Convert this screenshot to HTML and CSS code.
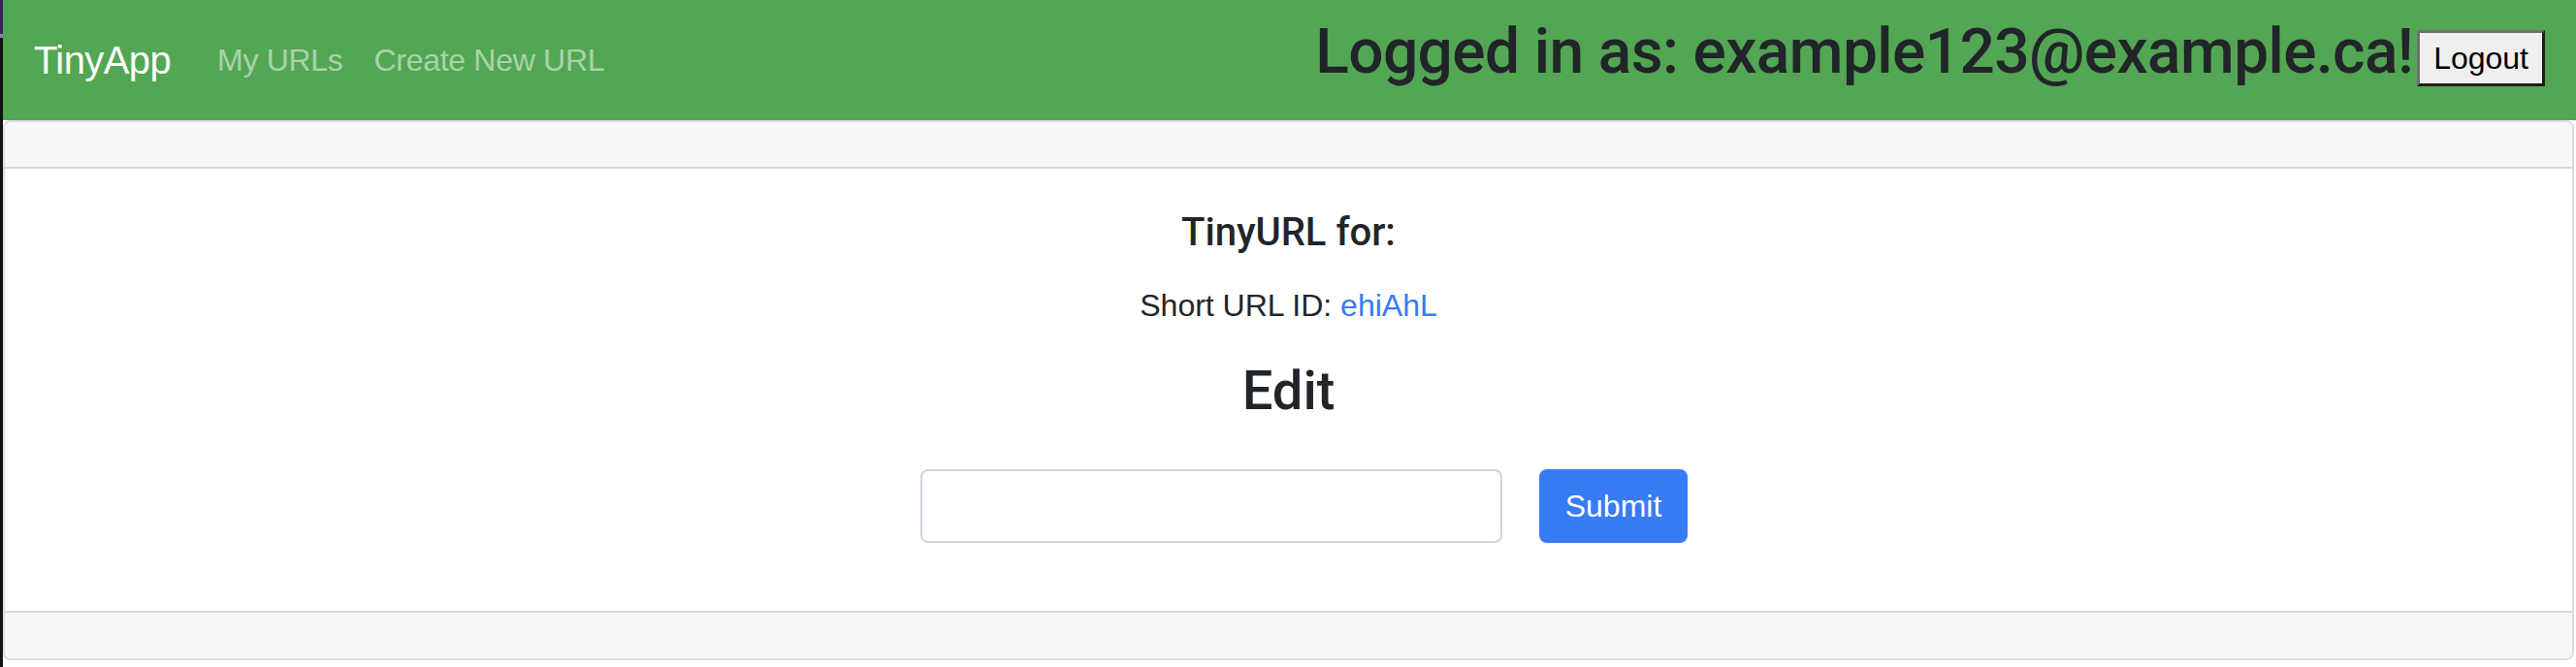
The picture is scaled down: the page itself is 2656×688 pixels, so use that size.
FILE: index.html
```html
<!DOCTYPE html>
<html lang="en">
<head>
<meta charset="utf-8">
<title>TinyApp</title>
<link rel="stylesheet" href="styles.css">
</head>
<body>
<nav class="navbar">
  <a class="brand" href="#">TinyApp</a>
  <div class="nav-links">
    <a class="nav-link" href="#">My URLs</a>
    <a class="nav-link" href="#">Create New URL</a>
  </div>
  <div class="user">
    <h2 class="user-title">Logged in as: example123@example.ca!</h2>
    <button class="logout" type="button">Logout</button>
  </div>
</nav>
<main class="card">
  <div class="card-header"></div>
  <div class="card-body">
    <h5 class="card-title">TinyURL for:</h5>
    <p class="card-text">Short URL ID: <a class="link" href="#">ehiAhL</a></p>
    <h3 class="edit-title">Edit</h3>
    <form class="edit-form">
      <input class="form-control" type="text" name="longURL">
      <button class="btn-primary" type="submit">Submit</button>
    </form>
  </div>
  <div class="card-footer"></div>
</main>
</body>
</html>
```
FILE: styles.css
```css
html, body {
  margin: 0;
  padding: 0;
}
body {
  background: #ffffff;
  min-height: 688px;
  box-sizing: border-box;
  border-left: 3px solid #111;
  border-image: linear-gradient(to bottom, #3b1f66 0, #3b1f66 36px, #8a8a8a 36px, #8a8a8a 40px, #121212 40px) 1;
  font-family: "Liberation Sans", Arial, sans-serif;
  color: #212529;
}
.navbar {
  display: flex;
  align-items: center;
  background: #53a653;
  padding: 16px 32px;
}
.brand {
  font-size: 40px;
  letter-spacing: -0.6px;
  color: #ffffff;
  text-decoration: none;
  margin-right: 32px;
  line-height: 60px;
}
.nav-links {
  display: flex;
}
.nav-link {
  font-size: 32px;
  letter-spacing: -0.3px;
  color: rgba(255, 255, 255, 0.52);
  text-decoration: none;
  padding: 0 16px;
  line-height: 48px;
}
.user {
  margin-left: auto;
  display: flex;
  align-items: center;
}
.user-title {
  font-family: Roboto, "Liberation Sans", sans-serif;
  font-weight: 500;
  font-size: 64px;
  letter-spacing: -0.6px;
  line-height: 76px;
  margin: 0 4px 16px 0;
  color: #212529;
}
.logout {
  font-family: "Liberation Sans", Arial, sans-serif;
  font-size: 32px;
  color: #000;
  background: #efefef;
  height: 58px;
  padding: 0 14px;
  border-width: 3px;
  border-style: solid;
  border-color: #707070 #1e1e1e #1e1e1e #707070;
  margin-bottom: 4px;
}
.card {
  display: block;
  border: 2px solid #dcdcdc;
  border-radius: 8px;
  margin: 0 2px 0 0;
  overflow: hidden;
}
.card-header {
  height: 46px;
  background: #f7f7f7;
  border-bottom: 2px solid #d9d9d9;
}
.card-body {
  height: 456px;
  box-sizing: border-box;
  padding: 42px 32px 0;
  text-align: center;
}
.card-title {
  font-family: Roboto, "Liberation Sans", sans-serif;
  font-weight: 500;
  font-size: 40px;
  line-height: 48px;
  margin: 0 0 27px;
}
.card-text {
  font-size: 32px;
  line-height: 48px;
  margin: 0 0 31px;
}
.link {
  color: #377bf5;
  text-decoration: none;
}
.edit-title {
  font-family: Roboto, "Liberation Sans", sans-serif;
  font-weight: 500;
  font-size: 56px;
  line-height: 67px;
  margin: 0 0 47px;
}
.edit-form {
  display: flex;
  justify-content: center;
  align-items: center;
  gap: 38px;
  padding-left: 32px;
}
.form-control {
  width: 600px;
  height: 76px;
  box-sizing: border-box;
  border: 2px solid #ced4da;
  border-radius: 8px;
  background: #fff;
  font-size: 32px;
  padding: 12px 24px;
}
.btn-primary {
  width: 153px;
  height: 76px;
  border: none;
  border-radius: 8px;
  background: #377bf5;
  color: #fff;
  font-family: "Liberation Sans", Arial, sans-serif;
  font-size: 32px;
}
.card-footer {
  height: 47px;
  background: #f7f7f7;
  border-top: 2px solid #d9d9d9;
}
```
